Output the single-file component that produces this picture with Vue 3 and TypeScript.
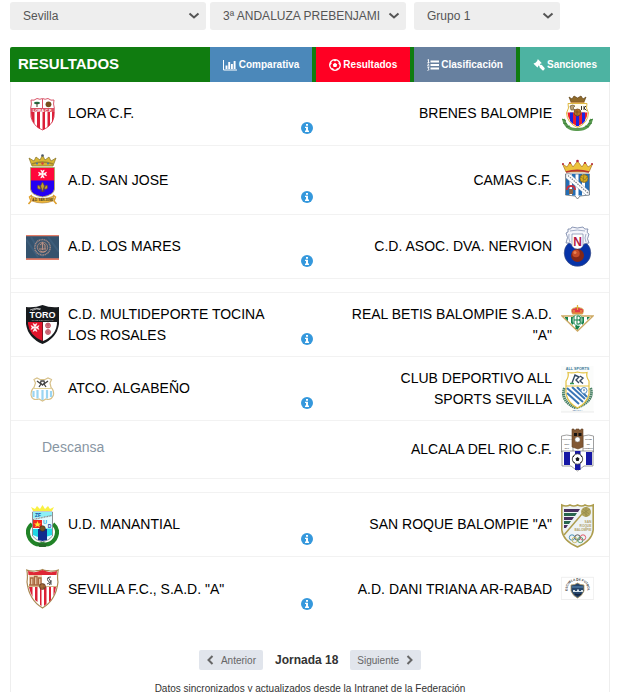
<script setup lang="ts">
import { ref } from 'vue'

interface Team {
  name: string
  crest: string
}

interface Match {
  home: Team | null
  away: Team
  size?: 'tall' | 'short'
}

const province = ref('Sevilla')
const category = ref('3ª ANDALUZA PREBENJAMI')
const group = ref('Grupo 1')

const blocks: Match[][] = [
  [
    { home: { name: 'LORA C.F.', crest: 'lora' }, away: { name: 'BRENES BALOMPIE', crest: 'brenes' } },
    { home: { name: 'A.D. SAN JOSE', crest: 'sanjose' }, away: { name: 'CAMAS C.F.', crest: 'camas' }, size: 'tall' },
    { home: { name: 'A.D. LOS MARES', crest: 'mares' }, away: { name: 'C.D. ASOC. DVA. NERVION', crest: 'nervion' } },
  ],
  [
    { home: { name: 'C.D. MULTIDEPORTE TOCINA LOS ROSALES', crest: 'toro' }, away: { name: 'REAL BETIS BALOMPIE S.A.D. "A"', crest: 'betis' } },
    { home: { name: 'ATCO. ALGABEÑO', crest: 'algabeno' }, away: { name: 'CLUB DEPORTIVO ALL SPORTS SEVILLA', crest: 'allsports' } },
    { home: null, away: { name: 'ALCALA DEL RIO C.F.', crest: 'alcala' }, size: 'short' },
  ],
  [
    { home: { name: 'U.D. MANANTIAL', crest: 'manantial' }, away: { name: 'SAN ROQUE BALOMPIE "A"', crest: 'sanroque' } },
    { home: { name: 'SEVILLA F.C., S.A.D. "A"', crest: 'sevilla' }, away: { name: 'A.D. DANI TRIANA AR-RABAD', crest: 'dani' } },
  ],
]

// Club crests, each drawn on a 33 x 52 canvas.
const crests: Record<string, string> = {
  lora: `
    <path d="M5 12Q8 13 11 10.500Q14 12 16.500 10.500Q19 12 22 10.500Q25 13 28 12Q27 16 28.300 20L28 29Q26 38 16.500 42Q7 38 5 29L4.700 20Q6 16 5 12Z" fill="#fff" stroke="#d9566a"/>
    <path d="M5 24H8.500V36Q5 32 5 24ZM11 24H14V41L11 39ZM16.500 24H19V41L16.500 42ZM21.500 24H24V37L21.500 39.500ZM26 24H28.300Q28 31 26 35Z" fill="#dc1f38"/>
    <path d="M5 20H28V24H5ZM16 11H17V20H16Z" fill="#dc5062"/>
    <text x="16.500" y="23.600" font-size="4" font-weight="bold" text-anchor="middle" fill="#fff">LORA C.F.</text>
    <ellipse cx="11" cy="15" rx="3" ry="1.300" fill="#276c43"/><path d="M10.500 15H11.500V19H10.500Z" fill="#463725"/>
    <circle cx="22.500" cy="16.300" r="2.900" fill="#75501d"/>`,
  brenes: `
    <path d="M2.500 31Q5 42 16 41.500Q28 42 30.500 31" fill="none" stroke="#5a9c50" stroke-width="3"/>
    <path d="M1 31L5 33M2 35L6 36M5 39L9 38M32 31L28 33M31 35L27 36M28 39L24 38" stroke="#3d7f3a" stroke-width="1"/>
    <path d="M10 14L8 9L11 11L13 8L16.500 10L20 8L22 11L25 9L23 14Z" fill="#8f6a2a" stroke="#614315" stroke-width=".7"/>
    <path d="M9.500 14.300H23.500" stroke="#c98a37" stroke-width="1"/>
    <path d="M7 15.500H26L25.500 20L27.500 25Q27 35 16.500 39.500Q6 35 5.500 25L7.500 20Z" fill="#fffdf0" stroke="#dfb944"/>
    <path d="M6.500 24.500H26.500Q26 34 16.500 38.500Q7 34 6.500 24.500Z" fill="#ef1c2b"/>
    <path d="M9 24.500H12V36L9 33ZM15 24.500H18V38H15ZM21 24.500H24V33L21 36Z" fill="#1d25df"/>
    <path d="M9 18Q12 16 14 18L12 20L14 22L10 22Z" fill="#b8a376" stroke="#5c4a2a" stroke-width=".6"/>
    <path d="M20.500 18V22M23 18V22M25 18L23 20L25.500 22.500" fill="none" stroke="#3a342e" stroke-width="1"/>
    <circle cx="16.500" cy="24.500" r="3.500" fill="#b47428" stroke="#683e12" stroke-width=".7"/><path d="M14 24H19M16 22V27" stroke="#683e12" stroke-width=".5"/>`,
  sanjose: `
    <path d="M6 12L3 4L8 7L10 3L14 6L16.500 1L19 6L23 3L25 7L30 4L27 12Z" fill="#d8b633" stroke="#837026" stroke-width=".7"/>
    <path d="M6 10Q16 6 27 10" stroke="#9e8432" fill="none" stroke-width="1.500"/>
    <circle cx="16.500" cy="1.500" r="1.300" fill="#4e5968"/><circle cx="16.500" cy="9.500" r="1.200" fill="#d54139"/><circle cx="11" cy="9.500" r="1" fill="#4778a4"/><circle cx="22" cy="9.500" r="1" fill="#4778a4"/>
    <path d="M4.500 13.500H28.500V35Q28 41 16.500 43Q5 41 4.500 35Z" fill="#2300f2" stroke="#b6a66d"/>
    <path d="M5 14H28V26.500H5Z" fill="#ff073a"/>
    <path d="M16.500 20L14.800 16L16.500 17L18.200 16ZL20.500 18.300L19.500 20L20.500 21.700ZL18.200 24L16.500 23L14.800 24ZL12.500 21.700L13.500 20L12.500 18.300Z" fill="#fff" stroke="#fff" stroke-width=".7"/>
    <path d="M16.500 28L18.500 32L16.500 38L14.500 32ZM15 35Q10 36 12 31Q14 31 15 35M18 35Q23 36 21 31Q19 31 18 35M14 37H19" fill="#c6a329" stroke="#654c35" stroke-width=".7"/>
    <path d="M5 42Q16 47 28 42L27 47Q16 51 6 47Z" fill="#efb83b" stroke="#a8782b" stroke-width=".6"/>
    <path d="M6 41L3.500 43L5 47L2.500 50M27 41L29.500 43L28 47L30.500 50" stroke="#df9f2b" stroke-width="1.500" fill="none"/>
    <text x="16.500" y="47.300" font-size="2.800" font-weight="bold" text-anchor="middle" fill="#3e3521">A.D. SAN JOSE</text>`,
  camas: `
    <path d="M5 18L1.500 10L6 13L9 8L12 13L16.500 7L21 13L24 8L27 13L31.500 10L28 18Z" fill="#edc23b" stroke="#aa7222" stroke-width=".7"/>
    <path d="M5 18Q16 15 28 18" stroke="#b73531" stroke-width="1.800" fill="none"/>
    <g fill="#b8293b"><circle cx="16.500" cy="7" r="1.300"/><circle cx="2" cy="10" r="1"/><circle cx="31" cy="10" r="1"/><circle cx="9" cy="9" r="1"/><circle cx="24" cy="9" r="1"/></g>
    <path d="M4.500 20H28.500V41L19 42L16.500 45L14 42L4.500 41Z" fill="#fff" stroke="#4d5a66" stroke-width=".7"/>
    <path d="M5 20H8.500V41H5ZM11 20H14.500V41.500H11ZM17.500 20H21V41.500H17.500ZM24 20H28V41H24Z" fill="#236db5"/>
    <path d="M5 20L9 20L28 37V41H25L5 24Z" fill="#fff" stroke="#738090" stroke-width=".4"/>
    <path d="M7 21.500L27 39" stroke="#85898f" stroke-width="1.300" stroke-dasharray="1.500 1"/>
    <circle cx="23" cy="24.500" r="4" fill="#d6ad20" stroke="#735a26" stroke-width=".7"/><path d="M20 23L24 26L26 23M23 20L22 28" fill="none" stroke="#826722" stroke-width=".6"/>
    <path d="M6 36Q6 32 10 32Q14 32 14 36" fill="none" stroke="#c72e3d" stroke-width="1.800"/><path d="M8 35H12V40H8Z" fill="#8d6445"/>`,
  mares: `
    <path d="M0 14H33V39H0Z" fill="#35536e"/><path d="M0 14H33V15.200H0ZM0 37.200H33V39H0Z" fill="#e27c67"/>
    <path d="M0 18L12 36M5 16L17 36M22 16L33 31" stroke="#466887" stroke-width="2" opacity=".5"/>
    <circle cx="16.500" cy="26.300" r="7.700" fill="none" stroke="#a08884" stroke-width="1.500" stroke-dasharray="1.200 .5"/>
    <circle cx="16.500" cy="26.300" r="5.200" fill="#4b5967" stroke="#b18b80" stroke-width=".8"/>
    <path d="M13 28H20M14 30Q17 32 20 30M16.500 21V29M14 24L16.500 22L19 24V28" stroke="#b88f84" fill="none"/>`,
  nervion: `
    <circle cx="16.500" cy="32" r="13.300" fill="#0633a8" stroke="#43517e" stroke-width=".6"/>
    <path d="M7 8Q10 9 11 6Q16 8 22 6Q23 9 27 8Q25 12 28 13Q25 18 28 22Q23 22 22 24Q16 31 11 24Q9 21 5 22Q8 16 5 12Q8 12 7 8Z" fill="#f4f5fb" stroke="#6e7da2" stroke-width=".8"/>
    <path d="M11 13H22V25Q20 28 16.500 28Q13 28 11 25Z" fill="#fff" stroke="#617398" stroke-width=".6"/>
    <path d="M9 10Q16 8 24 10M8 13Q7 17 9 21M25 13Q23 17 25 21" fill="none" stroke="#a3afc9"/>
    <text x="16.500" y="25" font-size="12" font-weight="bold" text-anchor="middle" fill="#b31743">N</text>
    <circle cx="16.500" cy="34.500" r="6.500" fill="#842717"/><circle cx="15" cy="32.500" r="3.700" fill="#c64c28"/><circle cx="14" cy="31.500" r="1.500" fill="#ec8251"/>`,
  toro: `
    <path d="M0 8Q9 9 16.500 6Q24 9 33 8V25Q31 39 16.500 45Q2 39 0 25Z" fill="#171a1d"/>
    <path d="M2 23H16.500V42Q3 36 2 25Z" fill="#e2132b"/><path d="M17 23H31Q31 36 17 42Z" fill="#fff"/>
    <text x="16.500" y="18.500" font-size="9" font-weight="bold" text-anchor="middle" fill="#fff">TORO</text>
    <path d="M4 11Q10 8 15 10M6 11.500Q11 9 14 10.500" fill="none" stroke="#e5e5e5" stroke-width=".7"/>
    <text x="16.500" y="21.800" font-size="2.500" text-anchor="middle" fill="#aaa">CLUB DEPORTIVO</text>
    <path d="M9 28.500L7 24.500L9 25.500L11 24.500ZL13 26.500L12 28.500L13 30.500ZL11 32.500L9 31.500L7 32.500ZL5 30.500L6 28.500L5 26.500Z" fill="#fff" stroke="#fff" stroke-width=".5"/>
    <g fill="#e0929b" stroke="#b43b4f" stroke-width=".7"><circle cx="22" cy="26.500" r="2.500"/><circle cx="22" cy="33" r="2.500"/><path d="M20 26H24M22 24V29M20 33H24M22 31V35"/></g>`,
  betis: `
    <path d="M1 17H32L16.500 32Z" fill="#fff" stroke="#cda963" stroke-width="1.300"/>
    <path d="M4 18H7V22L4 19ZM10 18H12V26L10 24ZM14.500 18H16V30H14.500ZM21 18H23V24L21 26ZM26 18H29L26 21ZM14 27H19L16.500 31Z" fill="#17824a"/>
    <circle cx="16.500" cy="21" r="5.200" fill="#fff" stroke="#269261" stroke-width=".7"/>
    <path d="M13 17V25M13 21H20M16 17H18Q21 19 18 21Q21 23 18 25H16ZM20 18V25" fill="none" stroke="#16824b" stroke-width="1"/>
    <path d="M11.500 15Q9 9 14 9L16.500 8L19 9Q24 9 21.500 15Z" fill="#e43848" stroke="#d0a84b"/><path d="M12 14H21M16.500 6V11M13 11V13M20 11V13" stroke="#e3b33c" stroke-width="1.200"/>`,
  algabeno: `
    <path d="M8 16.500L11 15L14 16.500H19L22 15L25.500 16.500L24 20L25 24.500Q28 27 27.500 32Q25 38 20 36L16.500 38L13 36Q6 38 5 32Q5 27 8 24.500L9.500 20Z" fill="#fff" stroke="#d7c18a" stroke-width="1.200"/>
    <path d="M7.500 28V34M11.500 27V35.500M16.500 27V37M21 27V35.500M25 28V34" stroke="#9bd5f2" stroke-width="2.200"/>
    <path d="M11 18L15 21L13 24M22 18L18 21L20 24M15 18H18L18.500 20L16.500 22L14.500 20Z" fill="none" stroke="#444" stroke-width="1.300"/><path d="M8 25.500H25" stroke="#e3d398"/>`,
  allsports: `
    <path d="M0 3H32.500V49H0Z" fill="#fbfcfb"/><path d="M0 49H33" stroke="#ddd" stroke-width=".6"/>
    <text x="16.500" y="6.600" font-size="3.700" font-weight="bold" text-anchor="middle" fill="#387896">ALL SPORTS</text>
    <path d="M3.500 25Q-1 38 15 45Q34 38 29.500 25" fill="none" stroke="#498065" stroke-width="3" stroke-dasharray="1.500 .5"/>
    <path d="M7 9.500Q11 10.500 16.500 9Q22 10.500 26 9.500Q25 14 28 18V31Q26 40 16.500 45Q7 40 5 31V18Q8 14 7 9.500Z" fill="#fff" stroke="#e3c243" stroke-width="1.200"/>
    <path d="M6 25L22 39M11 24L24 36M6 30L18 41M16 24L26 34" stroke="#3976b7" stroke-width="2"/>
    <path d="M5 23H28" stroke="#e3c243"/><circle cx="23" cy="27.500" r="3" fill="#fff" stroke="#588fc0"/><path d="M22 26.500H24L23 28.500Z" fill="#24588f"/>
    <path d="M11 20L14 12L18 14L15 17L18 20M19 13L22 15L19 18L22 20.500" fill="none" stroke="#354a62" stroke-width="1.400"/><path d="M9 20.500H13" stroke="#349651" stroke-width="1.500"/>
    <text x="16.500" y="48.300" font-size="2.500" text-anchor="middle" fill="#4c78a3">SEVILLA</text>`,
  alcala: `
    <path d="M.5 12Q5 10 12 12V28H.5ZM32.500 12Q28 10 22 12V28H32.500Z" fill="#fff" stroke="#888" stroke-width=".8"/>
    <path d="M1 27H32V42H23L16.500 47L10 42H1Z" fill="#fff" stroke="#777" stroke-width=".7"/>
    <path d="M3 28H9V41H3ZM14 27H19.500V46H14ZM25 28H31V41H25Z" fill="#1718a5"/>
    <path d="M11 5H13V6H15V5H18V6H20V5H22V23L17 25L11 23Z" fill="#825834" stroke="#674425" stroke-width=".6"/>
    <path d="M13 9H16V12H13ZM17.500 9H20.500V12H17.500Z" fill="#171413"/><circle cx="16.500" cy="15.500" r="2.500" fill="#fff" stroke="#888" stroke-width=".5"/>
    <circle cx="16.500" cy="35" r="5.200" fill="#fff" stroke="#333" stroke-width=".8"/><path d="M16.500 33L18.500 34.500L17.700 37H15.300L14.500 34.500Z" fill="#191919"/><path d="M12 33L13.500 31.500M21 33L19.500 31.500M13.500 39L12.500 37.500M19.500 39L20.500 37.500" stroke="#222"/>
    <g font-size="2.400" font-weight="bold" text-anchor="middle" fill="#555"><text x="6" y="16">ALCALA</text><text x="6" y="20.500">DEL</text><text x="6" y="25">RIO</text><text x="27.300" y="16">CLUB</text><text x="27.300" y="20.500">DE</text><text x="27.300" y="25">FUTBOL</text></g>`,
  manantial: `
    <path d="M6 25Q-1 31 4 40Q9 47 16.500 45Q24 47 29 40Q34 31 27 25" fill="none" stroke="#218327" stroke-width="4"/>
    <path d="M7 12L5 8L9 10L11 7L14 10L16.500 6L19 10L22 7L24 10L28 8L26 12Z" fill="#f9f041"/>
    <path d="M6.500 13H26.500V37Q24 41 16.500 43Q9 41 6.500 37Z" fill="#e4fbff" stroke="#777" stroke-width=".8"/>
    <path d="M7 13H26V17L7 19Z" fill="#8ceff7"/><path d="M7 21H16V29H7Z" fill="#f22722"/><path d="M16.500 29.500H26V36L16.500 39Z" fill="#23dce9"/><path d="M12 30H21V41L16.500 42L12 41Z" fill="#102a8e"/><path d="M7 30H12V38L7 36Z" fill="#20d5e5"/>
    <path d="M11.500 22L12.500 24.500H15L13 26L14 28L11.500 27L9 28L10 26L8 24.500H10.500Z" fill="#ffe52f"/>
    <text x="12" y="18" font-size="5" font-weight="bold" text-anchor="middle" fill="#144ca3">ZF</text><path d="M7 20.500L26 16.500" stroke="#888" stroke-width="1.300" stroke-dasharray="1 .6"/>
    <text x="19" y="24.500" font-size="5.500" font-weight="bold" text-anchor="middle" fill="#12a8dd">U</text><text x="23.500" y="28.500" font-size="5" font-weight="bold" text-anchor="middle" fill="#1549a5">D</text>
    <circle cx="16.500" cy="29.500" r="2.800" fill="#735425" stroke="#332916" stroke-width=".6"/><path d="M12 45L20 47M21 45L13 47" stroke="#266b29" stroke-width="2"/>`,
  sanroque: `
    <path d="M.8 6Q5 8 9 6Q13 8 16.500 6Q21 8 24 6Q28 8 32.200 6V31Q31 42 16.500 48Q2 42 .8 31Z" fill="#eef3f5" stroke="#ad9d4d" stroke-width="1.600"/>
    <path d="M3 10H19L17 13H3ZM3 18H13L11 21H3ZM3 26H7L5 29H3Z" fill="#48305f"/><path d="M3 14H16L14 17H3ZM3 22H10L8 25H3Z" fill="#28664d"/>
    <path d="M3 36L21 15" stroke="#ad9d4d" stroke-width="1.500"/><circle cx="25" cy="13" r="5" fill="#b1a45c"/><path d="M21 12L27 17M22 10L28 15M25 8V18M21 15L29 10" stroke="#8f8546" stroke-width=".6"/>
    <g font-size="3.200" font-weight="bold" text-anchor="end" fill="#b0a165"><text x="30.300" y="24">SAN</text><text x="30.300" y="28">ROQUE</text><text x="30.300" y="32">BALOMPIE</text></g>
    <g fill="none" stroke-width=".9"><circle cx="11" cy="38.500" r="2.700" stroke="#3984af"/><circle cx="16.500" cy="38.500" r="2.700" stroke="#4b4b4b"/><circle cx="22" cy="38.500" r="2.700" stroke="#dc4e5e"/><circle cx="13.700" cy="41" r="2.700" stroke="#cbb95d"/><circle cx="19.300" cy="41" r="2.700" stroke="#489b6a"/></g>`,
  sevilla: `
    <path d="M.8 7Q6 9 11 7.500Q14 8 16.500 6.500Q19 8 22 7.500Q27 9 32.200 7Q31 14 32 19Q30 37 16.500 45Q3 37 1 19Q2 13 .8 7Z" fill="#fff" stroke="#a98854" stroke-width="1.200"/>
    <path d="M2 8Q7 10 12 8.500L16.500 7L21 8.500Q26 10 31 8L30.500 12H2.500Z" fill="#df2635"/>
    <path d="M3 24H6.500V34Q4 29 3 24ZM9 24H11.500V39L9 37ZM14 24H15.500V43L14 42ZM18 24H20.500V41L18 43ZM23 24H25V37L23 39ZM27.500 24H30Q29 30 27.500 33Z" fill="#dc2035"/>
    <path d="M3 12H16V23H3Z" fill="#f0d5b6"/><path d="M4.500 22V15H7V22M8.500 22V13.500H11V22M12.500 22V15H15V22M3 22H16" stroke="#a8683f" stroke-width="1.300" fill="none"/>
    <path d="M18 12H30V23H18Z" fill="#fff"/><path d="M25 14Q20 14 22 18Q26 20 23 22M22 14L25 19L21 21M25 17V22" fill="none" stroke="#444" stroke-width=".9"/>
    <path d="M2 23.500H31" stroke="#c29854" stroke-width=".7"/><circle cx="16.500" cy="23.500" r="3" fill="#8d542f" stroke="#56321f" stroke-width=".6"/><path d="M14 23H19M16 21V26" stroke="#c58c4e" stroke-width=".5"/>`,
  dani: `
    <path d="M.3 14.300H32.700V36.500H.3Z" fill="#fff" stroke="#e4e4e4" stroke-width=".6"/>
    <path id="dani-arc" d="M6.500 28Q6 17.500 16.500 17.500Q27 17.500 26.500 28" fill="none"/><text font-size="3.100" font-weight="bold" fill="#333"><textPath href="#dani-arc">ESCUELA DE FUTBOL</textPath></text>
    <path d="M10 22Q14 22 16.500 20Q19 22 23 22V28Q21 33 16.500 35Q12 33 10 28Z" fill="#26466b" stroke="#b29b63" stroke-width=".8"/>
    <path d="M11 24H22" stroke="#5383ab" stroke-width="1.300"/><path d="M12 29V27H14V28H16V26.500H18V28H20V27H22V29Z" fill="#d5e1e9"/><path d="M14 31Q17 33 20 31" fill="none" stroke="#121e36" stroke-width="1.500"/>`,
}
</script>

<template>
  <main class="page">
    <form class="filters" @submit.prevent>
      <select v-model="province" class="filter wide" aria-label="Provincia"><option>Sevilla</option></select>
      <select v-model="category" class="filter wide" aria-label="Categoría"><option>3ª ANDALUZA PREBENJAMI</option></select>
      <select v-model="group" class="filter narrow" aria-label="Grupo"><option>Grupo 1</option></select>
    </form>

    <section class="panel">
      <header class="panel-head">
        <h1 class="title">RESULTADOS</h1>
        <nav class="tabs">
          <a href="#comparativa" class="tab blue">
            <svg class="tab-icon wide-icon" viewBox="0 0 14 12" aria-hidden="true"><path d="M.5 1V11H14" fill="none" stroke="currentColor" /><path d="M3.500 6.500V10M6.200 3V10M8.900 5V10M11.600 2V10" fill="none" stroke="currentColor" stroke-width="1.900" /></svg>
            <span>Comparativa</span>
          </a>
          <a href="#resultados" class="tab red">
            <svg class="tab-icon" viewBox="0 0 12 12" aria-hidden="true"><circle cx="6" cy="6" r="5.300" fill="none" stroke="currentColor" stroke-width="1.300" /><path d="M6 3.800L8.200 5.400L7.400 7.900H4.600L3.800 5.400ZM3.500 .8L6 2.400L8.500 .8ZM.5 6.500L2.700 4.800L1.700 2.300ZM11.500 6.500L9.300 4.800L10.300 2.300ZM1.800 9.200L4.200 9.200L5 11.500ZM10.200 9.200L7.800 9.200L7 11.500Z" fill="currentColor" /></svg>
            <span>Resultados</span>
          </a>
          <a href="#clasificacion" class="tab slate">
            <svg class="tab-icon" viewBox="0 0 12 12" aria-hidden="true"><path d="M3.500 2.500H12M3.500 6H12M3.500 9.500H12" stroke="currentColor" stroke-width="2" /><path d="M.5 1L1.500 .5V3.500M.5 3.500H2.500M.5 5H2L.5 7H2.500M.5 8.500H2L1.200 9.800L2.200 10.500L.5 11.500" fill="none" stroke="currentColor" stroke-width=".9" /></svg>
            <span>Clasificación</span>
          </a>
          <a href="#sanciones" class="tab teal">
            <svg class="tab-icon" viewBox="0 0 12 12" aria-hidden="true"><path d="M5 .3L8.700 4L7.900 4.800L7.400 4.600L6.900 5.200L7.600 5.900Q8.300 5.500 8.900 6.100L11.600 8.900Q12 9.700 11.300 10.500Q10.500 11.900 9.400 11.200L6.600 8.400Q6.200 7.800 6.500 7.200L5.800 6.500L5 7.200L5.200 7.800L4.400 8.600L.5 4.800L1.300 4L1.900 4.200L4.400 1.700L4.200 1.100Z" fill="currentColor" /></svg>
            <span>Sanciones</span>
          </a>
        </nav>
      </header>

      <table class="matches" aria-label="Resultados">
        <colgroup>
          <col class="crest-col" /><col /><col class="info-col" /><col /><col class="crest-col" />
        </colgroup>
        <tbody v-for="(block, b) in blocks" :key="b">
          <tr v-if="b > 0" class="spacer"><td colspan="5"></td></tr>
          <tr v-for="match in block" :key="match.away.name" class="match" :class="match.size">
            <template v-if="match.home">
              <td><svg class="crest" viewBox="0 0 33 52" aria-hidden="true" v-html="crests[match.home.crest]"></svg></td>
              <td class="team">{{ match.home.name }}</td>
            </template>
            <td v-else colspan="2" class="rest">Descansa</td>
            <td class="info">
              <a v-if="match.home" href="#partido" class="info-link" aria-label="Información del partido">
                <svg class="info-icon" viewBox="0 0 12 12" aria-hidden="true"><circle cx="6" cy="6" r="6" fill="#3598dc" /><path d="M5 2H7V3.700H5ZM4 4.700H7V8.500H8V10H4V8.500H5V6H4Z" fill="#fff" /></svg>
              </a>
            </td>
            <td class="team away">{{ match.away.name }}</td>
            <td class="away"><svg class="crest" viewBox="0 0 33 52" aria-hidden="true" v-html="crests[match.away.crest]"></svg></td>
          </tr>
        </tbody>
      </table>

      <footer class="panel-foot">
        <div class="pager">
          <button type="button" class="page-button">
            <svg class="arrow" viewBox="0 0 8 10" aria-hidden="true"><path d="M6.500 1L2.500 5L6.500 9" fill="none" stroke="currentColor" stroke-width="2" /></svg>
            <span>Anterior</span>
          </button>
          <strong class="round">Jornada 18</strong>
          <button type="button" class="page-button">
            <span>Siguiente</span>
            <svg class="arrow" viewBox="0 0 8 10" aria-hidden="true"><path d="M1.500 1L5.500 5L1.500 9" fill="none" stroke="currentColor" stroke-width="2" /></svg>
          </button>
        </div>
        <p class="note">Datos sincronizados y actualizados desde la Intranet de la Federación</p>
      </footer>
    </section>
  </main>
</template>

<style>
body {
  margin: 0;
  background: #fff;
}
</style>

<style scoped>
.page {
  padding: 2px 25px 0 10px;
  color: #333;
  font-family: "Liberation Sans", Arial, sans-serif;
}
.filters {
  display: flex;
  gap: 4px;
  margin-bottom: 17px;
}
.filter {
  height: 28px;
  padding: 0 24px 0 13px;
  border: 0;
  border-radius: 3px;
  appearance: none;
  background: #eee url("data:image/svg+xml,%3Csvg xmlns='http://www.w3.org/2000/svg' viewBox='0 0 12 8'%3E%3Cpath d='M1.500 1.500L6 5.500L10.500 1.500' fill='none' stroke='%23555' stroke-width='2'/%3E%3C/svg%3E") no-repeat right 6px center / 12px 8px;
  color: #555;
  font-family: inherit;
  font-size: 12px;
}
.wide {
  flex: 0 1 196px;
  min-width: 0;
}
.narrow {
  flex: 0 1 146px;
  margin-left: 4px;
}
.panel-head {
  display: flex;
  align-items: stretch;
  justify-content: space-between;
  height: 35px;
  background: #107c10;
  color: #fff;
  border-radius: 2px 0 0 0;
}
.title {
  margin: 0;
  padding-left: 8px;
  font-size: 15px;
  line-height: 33px;
}
.tabs {
  display: flex;
  gap: 4px;
}
.tab {
  display: flex;
  align-items: center;
  gap: 2px;
  padding: 0 13px;
  color: #fff;
  font-size: 10px;
  font-weight: bold;
  text-decoration: none;
}
.tab-icon {
  width: 12px;
  height: 12px;
}
.wide-icon {
  width: 14px;
}
.blue {
  background: #4b88ba;
}
.red {
  background: #ff0023;
}
.slate {
  background: #67809f;
}
.teal {
  background: #4db3a2;
}
.matches {
  width: 100%;
  table-layout: fixed;
  border-spacing: 0;
  border: solid #eee;
  border-width: 0 1px;
  color: #000;
  font-size: 14px;
  line-height: 21px;
}
.matches td {
  padding: 0;
  border-bottom: 1px solid #f2f2f2;
}
.matches tbody:last-child tr:last-child td {
  border-bottom: 0;
}
.crest-col {
  width: 57px;
}
.info-col {
  width: 70px;
}
.match {
  height: 64px;
}
.tall {
  height: 69px;
}
.short {
  height: 58px;
}
.spacer {
  height: 14px;
}
.crest {
  display: block;
  width: 33px;
  height: 52px;
  margin-left: 15px;
}
.away .crest {
  margin-left: 9px;
}
.team.away {
  text-align: right;
}
.matches .rest {
  padding: 0 0 5px 31px;
  color: #8896a3;
}
.matches .info {
  padding: 0 6px 5px 0;
  vertical-align: bottom;
  text-align: center;
}
.info-link {
  display: inline-block;
  height: 12px;
  line-height: 12px;
}
.info-icon {
  display: block;
  width: 12px;
  height: 12px;
}
.panel-foot {
  padding-top: 29px;
  border: solid #eee;
  border-width: 0 1px;
}
.pager {
  display: flex;
  align-items: center;
  justify-content: center;
  gap: 12px;
  height: 20px;
}
.page-button {
  display: flex;
  align-items: center;
  gap: 7px;
  height: 20px;
  padding: 0 7px;
  border: 0;
  border-radius: 2px;
  background: #e1e5ec;
  color: #666;
  font-family: inherit;
  font-size: 10px;
}
.arrow {
  width: 8px;
  height: 10px;
}
.round {
  font-size: 12px;
}
.note {
  margin: 12px 0 0;
  font-size: 10px;
  line-height: 13px;
  text-align: center;
}
</style>
